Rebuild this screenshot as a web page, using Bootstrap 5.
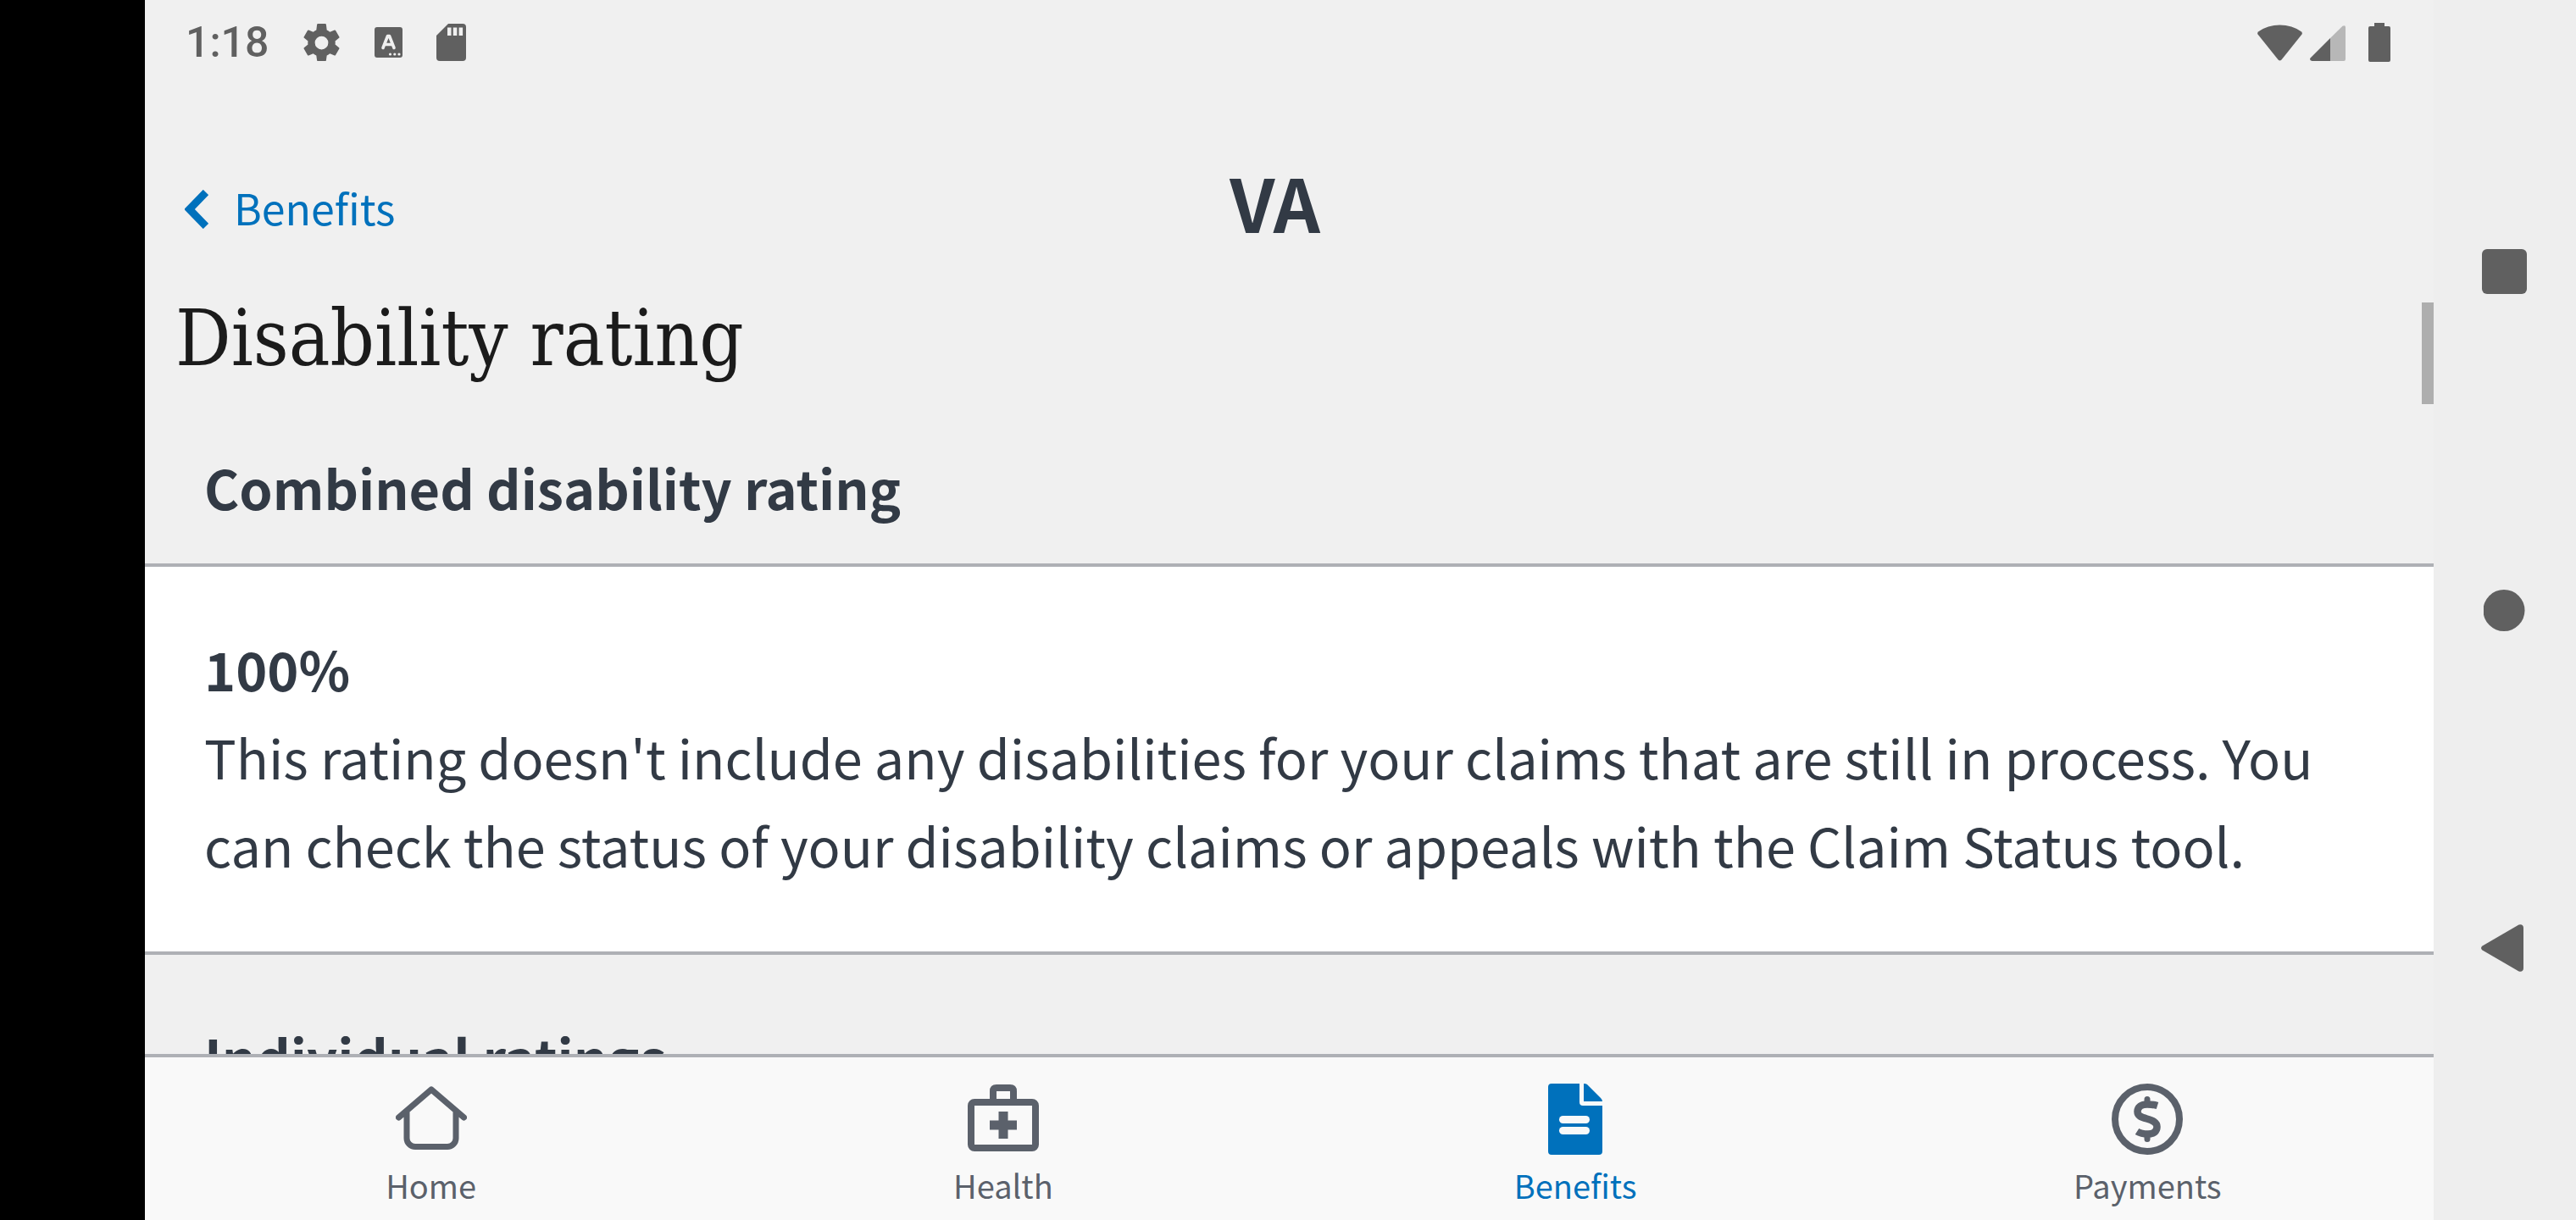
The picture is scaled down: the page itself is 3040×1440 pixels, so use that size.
<!DOCTYPE html>
<html lang="en">
<head>
<meta charset="utf-8">
<meta name="viewport" content="width=device-width, initial-scale=1">
<title>Disability rating</title>
<link href="https://cdn.jsdelivr.net/npm/bootstrap@5.3.0/dist/css/bootstrap.min.css" rel="stylesheet">
<style>
  :root { --ink: #323a45; --sys: #606060; --link-blue: #0071bc; --muted: #5b616b; --rule: #aeb0b5; }
  body { font-family: "Noto Sans CJK JP", "Noto Sans", sans-serif; color: var(--ink); background: #000; }
  svg { display: block; flex: none; }
  .cutout { width: 171px; background: #000; }
  .app-pane { min-width: 0; background: #f0f0f0; }
  .status-bar { height: 100px; padding: 0 51px 0 48px; color: var(--sys); }
  .clock { font: 500 50px/100px Roboto, sans-serif; width: 138px; }
  .signal-icon { margin: 2px 27px 0 9px; }
  .header-row { display: grid; grid-template-columns: 1fr auto 1fr; padding: 106px 81px 57px 47px; height: 245px; align-items: center; }
  .back-link { color: var(--link-blue); font-size: 50px; line-height: 72px; gap: 30px; }
  .back-link span { padding-bottom: 6px; }
  .brand-mark { font-size: 86px; line-height: 64px; font-weight: 700; padding-bottom: 18px; }
  .page-title { font: 400 91px/110px "DejaVu Serif Condensed", "DejaVu Serif", serif; font-stretch: condensed; color: #1b1b1b; padding: 0 36px; }
  .section-title, .copy { font-size: 63px; line-height: 104px; }
  .section-title { font-weight: 700; padding: 68px 70px 38px; }
  .rating-panel { border: solid var(--rule); border-width: 4px 0; padding: 68px 70px 74px; }
  .scroll-thumb { top: 12px; right: 0; width: 14px; height: 120px; background: #aeaeae; }
  .tab-bar { background: #f9f9f9; border-top: 4px solid var(--rule); height: 196px; }
  .tab-link { color: var(--muted); font-size: 38px; line-height: 56px; padding-top: 31px; gap: 8px; }
  .tab-link.active { color: var(--link-blue); }
  .sys-nav { width: 168px; background: #eee; padding: 293px 0; }
  .sys-nav button { color: var(--sys); }
</style>
</head>
<body>
<div class="d-flex vh-100 overflow-hidden">
  <div class="cutout flex-shrink-0"></div>

  <div class="app-pane flex-grow-1 d-flex flex-column">
    <div class="status-bar d-flex align-items-center flex-shrink-0">
      <span class="clock">1:18</span>
      <svg class="me-4" width="45" height="45" viewBox="2 2 20 20" fill="currentColor"><path d="M19.140 12.940c.04-.3.06-.61.06-.94s-.02-.64-.07-.94l2.030-1.580a.49.49 0 0 0 .12-.61l-1.920-3.320a.49.49 0 0 0-.59-.22l-2.390.96a7 7 0 0 0-1.620-.94L14.400 2.410A.48.48 0 0 0 13.920 2h-3.840a.48.48 0 0 0-.47.410L9.250 5.350a7 7 0 0 0-1.620.94l-2.390-.96a.49.49 0 0 0-.59.220L2.740 8.870a.48.48 0 0 0 .12.610l2.030 1.580c-.05.3-.09.63-.09.94s.02.640.07.940l-2.030 1.580a.49.49 0 0 0-.12.610l1.920 3.320c.12.220.37.290.59.220l2.390-.960c.5.380 1.030.700 1.620.940l.36 2.540c.05.240.24.410.48.410h3.840c.24 0 .44-.17.47-.41l.36-2.540a7 7 0 0 0 1.620-.940l2.390.960c.22.080.47 0 .59-.220l1.920-3.320a.49.49 0 0 0-.12-.610zM12 15.500a3.500 3.500 0 1 1 0-7 3.500 3.500 0 0 1 0 7z"/></svg>
      <svg class="mx-3" width="33" height="36" viewBox="0 0 33 36"><rect width="33" height="36" rx="3" fill="currentColor"/><path d="M10 24.500 15.500 10.500h2L23 24.500M12 20.500h9" fill="none" stroke="#f0f0f0" stroke-width="3.600" stroke-linecap="round" stroke-linejoin="round"/><g fill="#f0f0f0"><circle cx="18.500" cy="32" r="1.600"/><circle cx="23.800" cy="32" r="1.600"/><circle cx="29" cy="32" r="1.600"/></g></svg>
      <svg class="ms-4" width="35" height="44" viewBox="0 0 35 44"><path d="M14 0h17a4 4 0 0 1 4 4v36a4 4 0 0 1-4 4H4a4 4 0 0 1-4-4V14z" fill="currentColor"/><path d="M13 4.500h4.500V14H13zm6.800 0h4.500V14h-4.500zm6.800 0h4.500V14h-4.500z" fill="#f0f0f0"/></svg>
      <svg class="ms-auto" width="53" height="43" viewBox="0 0 53 43"><path d="M1 8.500C15-2.200 38-2.200 52 8.500q1.500 1.500.5 3L28.500 41.500q-2 2-4 0L.5 11.500q-1-1.500.5-3z" fill="currentColor"/></svg>
      <svg class="signal-icon" width="42" height="42" viewBox="0 0 42 42"><path d="M24 15 38.500.7Q42-.8 42 2v38a2 2 0 0 1-2 2H24z" fill="#b7b7b7"/><path d="M24 15v27H2.500Q-1 41.500.5 38.500z" fill="currentColor"/></svg>
      <svg width="26" height="46" viewBox="0 0 26 46" fill="currentColor"><path d="M7 0h12v4h5a2 2 0 0 1 2 2v38a2 2 0 0 1-2 2H2a2 2 0 0 1-2-2V6a2 2 0 0 1 2-2h5z"/></svg>
    </div>

    <header class="header-row flex-shrink-0">
      <a class="back-link d-flex align-items-center text-decoration-none" href="#benefits">
        <svg width="28" height="46" viewBox="0 0 28 46" fill="none" stroke="currentColor" stroke-width="9"><path d="M25 3 5.500 23 25 43"/></svg>
        <span>Benefits</span>
      </a>
      <span class="brand-mark">VA</span>
    </header>

    <main class="flex-grow-1 position-relative overflow-hidden">
      <h1 class="page-title m-0">Disability rating</h1>
      <h2 class="section-title m-0">Combined disability rating</h2>
      <section class="rating-panel bg-white copy">
        <div class="fw-bold">100%</div>
        <p class="m-0">This rating doesn't include any disabilities for your claims that are still in process. You can check the status of your disability claims or appeals with the Claim Status tool.</p>
      </section>
      <h2 class="section-title m-0">Individual ratings</h2>
      <div class="scroll-thumb position-absolute"></div>
    </main>

    <nav class="tab-bar nav nav-fill flex-nowrap flex-shrink-0">
      <a class="tab-link col d-flex flex-column align-items-center text-decoration-none" href="#home">
        <svg width="84" height="84" viewBox="0 0 84 84" fill="none" stroke="currentColor" stroke-width="7" stroke-linecap="round" stroke-linejoin="round"><path d="M3.500 40 42 7l38.500 33M13 33v31.500A10 10 0 0 0 23 74.500h38a10 10 0 0 0 10-10V33"/></svg>
        <span>Home</span>
      </a>
      <a class="tab-link col d-flex flex-column align-items-center text-decoration-none" href="#health">
        <svg width="84" height="84" viewBox="0 0 84 84" fill="none" stroke="currentColor" stroke-width="8"><rect x="4" y="22" width="76" height="54" rx="4"/><path d="M30 20V9q0-4 4-4h16q4 0 4 4v11"/><path d="M26 49h32M42 33v32" stroke-width="11"/></svg>
        <span>Health</span>
      </a>
      <a class="tab-link active col d-flex flex-column align-items-center text-decoration-none" href="#benefits" aria-current="page">
        <svg width="84" height="84" viewBox="0 0 84 84" fill="currentColor"><path d="M14 0h33v22a4 4 0 0 0 4 4h23v54a4 4 0 0 1-4 4H14a4 4 0 0 1-4-4V4a4 4 0 0 1 4-4z"/><path d="M52 0q3 0 4 1l16 16q2 2 2 4H52z"/><g fill="#f9f9f9"><rect x="23" y="38" width="36" height="9" rx="4.500"/><rect x="23" y="51" width="36" height="9" rx="4.500"/></g></svg>
        <span>Benefits</span>
      </a>
      <a class="tab-link col d-flex flex-column align-items-center text-decoration-none" href="#payments">
        <svg width="84" height="84" viewBox="0 0 84 84" fill="none" stroke="currentColor" stroke-width="8"><circle cx="42" cy="42" r="38"/><path d="M54 26C49 24.500 46 24.500 42 24.500c-7 0-11.500 3-11.500 8.500 0 5 4 6.500 11 8.500s12 4 12 9.500-4 8.500-10.500 8.500c-5 0-9-.5-13-3" stroke-width="8.500"/><path d="M42 18.500v6M42 60v5.500" stroke-linecap="round" stroke-width="7"/></svg>
        <span>Payments</span>
      </a>
    </nav>
  </div>

  <div class="sys-nav flex-shrink-0 d-flex flex-column justify-content-between align-items-center">
    <button class="btn p-0 border-0" aria-label="Recent apps"><svg width="54" height="56" viewBox="0 0 54 56" fill="currentColor"><rect y="1" width="53" height="53" rx="6"/></svg></button>
    <button class="btn p-0 border-0" aria-label="Home screen"><svg width="50" height="49" viewBox="0 0 50 49" fill="currentColor"><circle cx="24" cy="24.500" r="24.500"/></svg></button>
    <button class="btn p-0 border-0" aria-label="Back"><svg width="56" height="56" viewBox="0 0 56 56" fill="currentColor"><path d="M1.500 25.500 44.500.6Q49.500-.8 50 4v48q-.5 4.800-5.500 3.400L1.500 30.500q-3-2.500 0-5z"/></svg></button>
  </div>
</div>
<script src="https://cdn.jsdelivr.net/npm/bootstrap@5.3.0/dist/js/bootstrap.bundle.min.js"></script>
</body>
</html>
